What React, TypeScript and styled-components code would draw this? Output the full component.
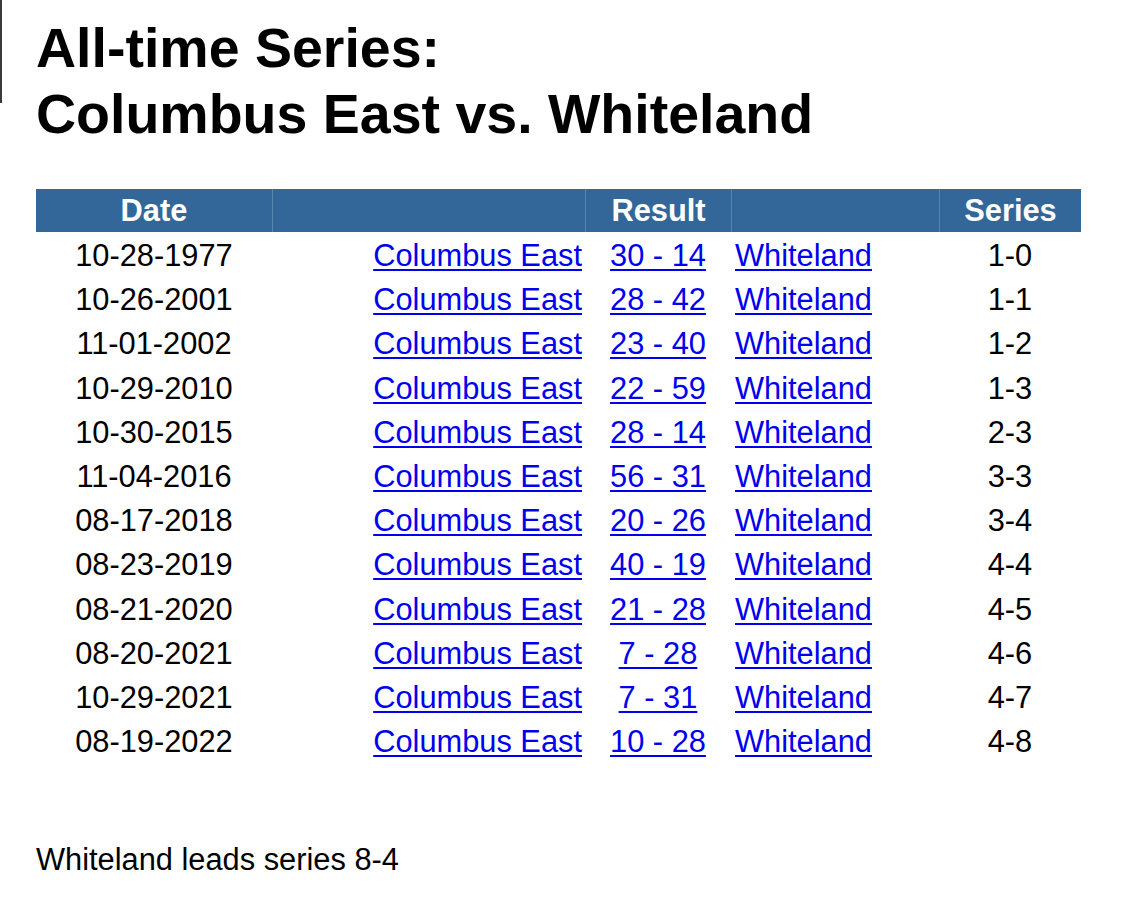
import { memo } from 'react';
import styled, { createGlobalStyle } from 'styled-components';

const games = [
  { date: '10-28-1977', score: '30 - 14', series: '1-0' },
  { date: '10-26-2001', score: '28 - 42', series: '1-1' },
  { date: '11-01-2002', score: '23 - 40', series: '1-2' },
  { date: '10-29-2010', score: '22 - 59', series: '1-3' },
  { date: '10-30-2015', score: '28 - 14', series: '2-3' },
  { date: '11-04-2016', score: '56 - 31', series: '3-3' },
  { date: '08-17-2018', score: '20 - 26', series: '3-4' },
  { date: '08-23-2019', score: '40 - 19', series: '4-4' },
  { date: '08-21-2020', score: '21 - 28', series: '4-5' },
  { date: '08-20-2021', score: '7 - 28', series: '4-6' },
  { date: '10-29-2021', score: '7 - 31', series: '4-7' },
  { date: '08-19-2022', score: '10 - 28', series: '4-8' },
];

export default memo(function App() {
  return (
    <>
      <GlobalStyle />
      <Page>
        <Top>
          <Edge />
          <Title>
            All-time Series:
            <br />
            Columbus East vs. Whiteland
          </Title>
        </Top>

        <Table>
          <HeadRow>
            <HeadCell>Date</HeadCell>
            <HeadCell $divider />
            <HeadCell $divider>Result</HeadCell>
            <HeadCell $divider />
            <HeadCell $divider>Series</HeadCell>
          </HeadRow>
          <Body>
            {games.map((g) => (
              <Row key={g.date}>
                <Cell $align="center">{g.date}</Cell>
                <Cell $align="right">
                  <a href="#">Columbus East</a>
                </Cell>
                <Cell $align="center">
                  <a href="#">{g.score}</a>
                </Cell>
                <Cell $align="left">
                  <a href="#">Whiteland</a>
                </Cell>
                <Cell $align="center">{g.series}</Cell>
              </Row>
            ))}
          </Body>
        </Table>

        <Footer>Whiteland leads series 8-4</Footer>
      </Page>
    </>
  );
});

const GlobalStyle = createGlobalStyle`
  html, body {
    margin: 0;
    padding: 0;
    background: #fff;
  }
  body {
    font-family: "Liberation Sans", Arial, sans-serif;
    color: #000;
  }
`;

const Page = styled.div`
  width: 1133px;
  min-height: 905px;
`;

const Top = styled.div`
  display: flex;
  align-items: flex-start;
`;

const Edge = styled.div`
  width: 2px;
  height: 103px;
  background: #3a3a3a;
  flex-shrink: 0;
`;

const Title = styled.h1`
  margin: 15px 0 0 34px;
  font-size: 55.5px;
  line-height: 66px;
  font-weight: bold;
  letter-spacing: 0;
`;

const COLS = '236px 313px 146px 208px 142px';

const Table = styled.div`
  margin: 42px 0 0 36px;
  width: 1045px;
  font-size: 30.8px;
`;

const HeadRow = styled.div`
  display: grid;
  grid-template-columns: ${COLS};
  height: 43px;
  background: #336699;
`;

const HeadCell = styled.div<{ $divider?: boolean }>`
  color: #fff;
  font-weight: bold;
  line-height: 43px;
  text-align: center;
  border-left: ${(p) => (p.$divider ? '1px solid #5c85ae' : 'none')};
`;

const Body = styled.div`
  margin-top: 2px;
`;

const Row = styled.div`
  display: grid;
  grid-template-columns: ${COLS};
  height: 44.2px;
`;

const Cell = styled.div<{ $align: 'left' | 'center' | 'right' }>`
  line-height: 44.2px;
  white-space: nowrap;
  text-align: ${(p) => p.$align};
  padding: ${(p) =>
    p.$align === 'right' ? '0 3px 0 0' : p.$align === 'left' ? '0 0 0 4px' : '0'};

  a {
    color: #0000ee;
    text-decoration: underline;
    text-decoration-thickness: 2px;
    text-underline-offset: 3px;
  }
`;

const Footer = styled.p`
  margin: 78px 0 0 36px;
  font-size: 30.8px;
  line-height: 35.4px;
`;
